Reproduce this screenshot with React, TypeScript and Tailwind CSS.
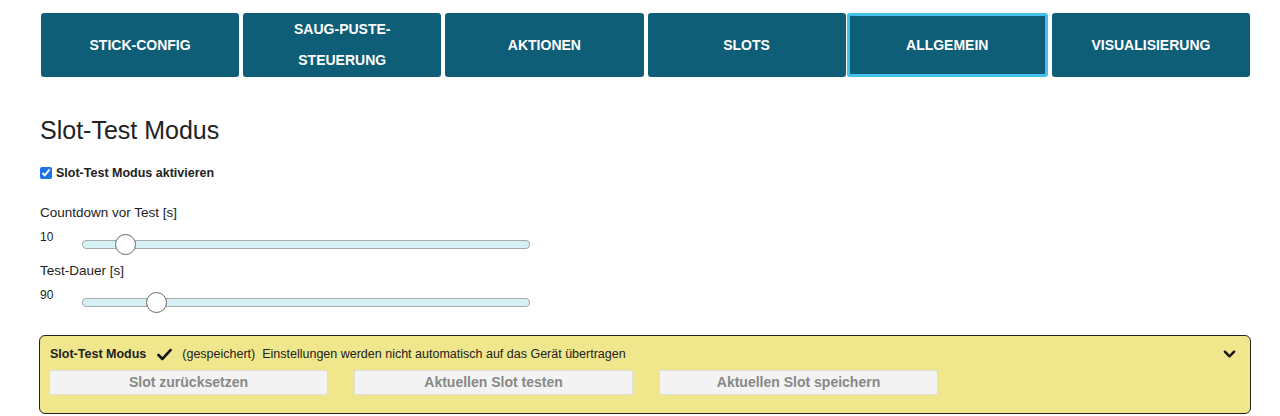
import React from "react";

const tabs = ["STICK-CONFIG", "SAUG-PUSTE-STEUERUNG", "AKTIONEN", "SLOTS", "ALLGEMEIN", "VISUALISIERUNG"];

function Slider({ pos }: { pos: number }) {
  return (
    <div className="relative ml-[42px] mt-[11px] h-[9px] w-[448px] rounded-[4px] border border-[#a9a9a9] bg-[#d5f1f6]">
      <div
        className="absolute top-[-7px] h-[21px] w-[21px] rounded-full border border-[#666] bg-white"
        style={{ left: pos }}
      />
    </div>
  );
}

export default function App() {
  return (
    <div className="min-h-[416px] bg-white font-['Liberation_Sans',Arial,sans-serif] text-[#222]">
      <div className="ml-[41px] grid w-[1209px] grid-cols-6 gap-[4px] pt-[13px]">
        {tabs.map((t) => (
          <div
            key={t}
            className={
              "flex h-[64px] items-center justify-center rounded-[3px] bg-[#0f5e78] px-6 text-center text-[14px] font-bold leading-[31px] text-white " +
              (t === "ALLGEMEIN" ? "-ml-[3px] border-[3px] border-[#45c2ea]" : "")
            }
          >
            {t === "SAUG-PUSTE-STEUERUNG" ? (
              <span>
                SAUG-PUSTE-
                <br />
                STEUERUNG
              </span>
            ) : (
              t
            )}
          </div>
        ))}
      </div>

      <div className="pl-[40px]">
        <h1 className="mt-[39px] text-[25px] leading-[28px] text-[#222]">Slot-Test Modus</h1>

        <label className="mt-[21px] flex h-[16px] items-center text-[12.5px] font-bold">
          <input type="checkbox" defaultChecked className="m-0 mr-[4px] h-[12px] w-[12px] accent-[#1a73e8]" />
          Slot-Test Modus aktivieren
        </label>

        <div className="mt-[24px] h-[16px] text-[13.5px] leading-[16px]">Countdown vor Test [s]</div>
        <div className="mt-[8px] flex h-[26px] items-start">
          <span className="w-[0px] text-[12px] leading-[16px]">10</span>
          <Slider pos={32} />
        </div>

        <div className="mt-[8px] h-[16px] text-[13.5px] leading-[16px]">Test-Dauer [s]</div>
        <div className="mt-[8px] flex h-[26px] items-start">
          <span className="w-[0px] text-[12px] leading-[16px]">90</span>
          <Slider pos={63} />
        </div>
      </div>

      <div className="ml-[39px] mt-[22px] h-[79px] w-[1212px] rounded-[6px] border border-[#222] bg-[#f0e68c] pl-[10px] pr-[14px] pt-[10px]">
        <div className="flex h-[16px] items-center text-[12.5px] leading-[16px]">
          <span className="font-bold">Slot-Test Modus</span>
          <svg className="ml-[11px] mr-[10px] h-[13px] w-[15px]" viewBox="0 0 16 14">
            <path d="M1.5 7.5 L5.8 11.8 L14.5 2.2" fill="none" stroke="#111" strokeWidth="2.8" strokeLinecap="round" strokeLinejoin="round" />
          </svg>
          <span>(gespeichert)&nbsp; Einstellungen werden nicht automatisch auf das Gerät übertragen</span>
          <svg className="ml-auto h-[10px] w-[13px]" viewBox="0 0 14 10">
            <path d="M2 2.5 L7 7.5 L12 2.5" fill="none" stroke="#111" strokeWidth="2.6" strokeLinecap="round" strokeLinejoin="round" />
          </svg>
        </div>
        <div className="-ml-[1px] mt-[8px] flex gap-[26px]">
          {["Slot zurücksetzen", "Aktuellen Slot testen", "Aktuellen Slot speichern"].map((b) => (
            <div
              key={b}
              className="flex h-[25px] w-[279px] items-center justify-center rounded-[2px] border border-[#dedede] bg-[#f3f3f3] text-[14px] font-bold text-[#888]"
            >
              {b}
            </div>
          ))}
        </div>
      </div>
    </div>
  );
}
